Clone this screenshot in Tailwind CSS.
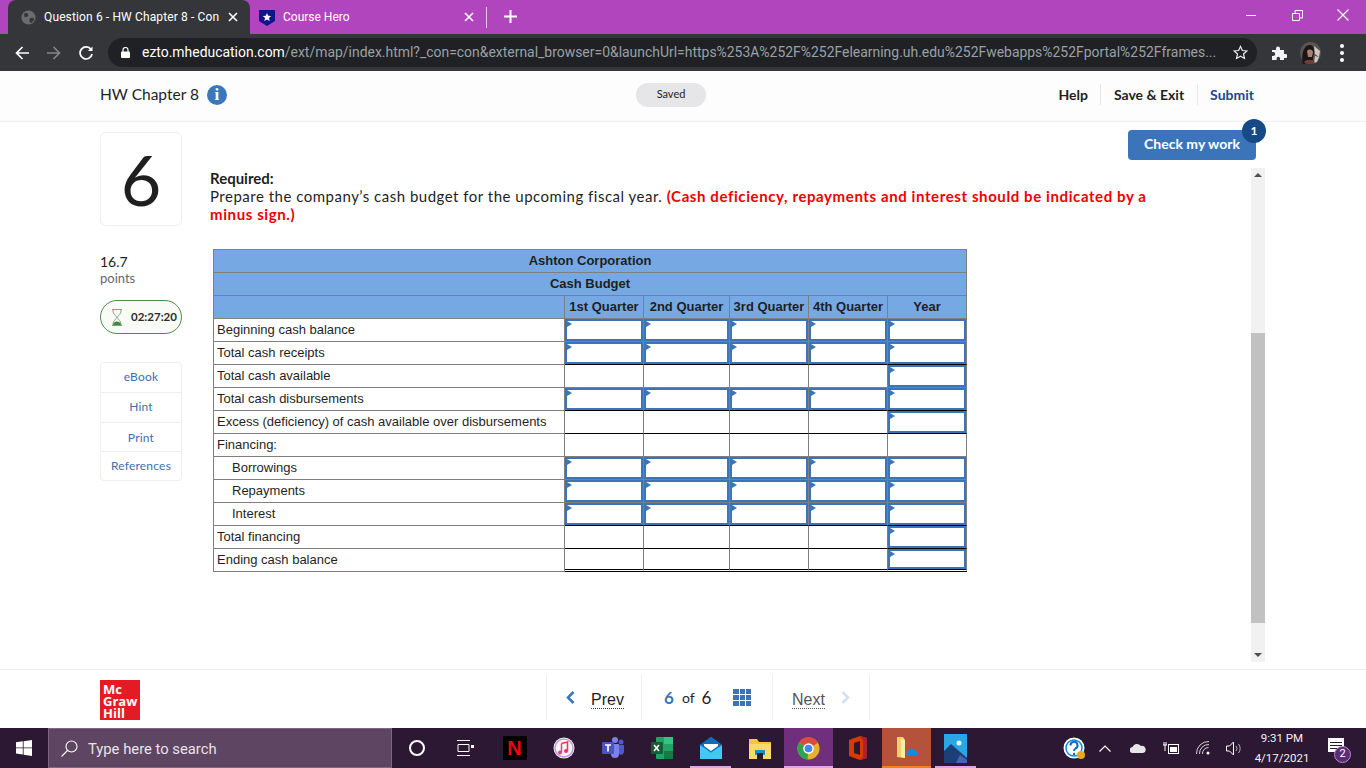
<!DOCTYPE html>
<html lang="en">

<head>
  <meta charset="UTF-8" />
  <title>Question 6 - HW Chapter 8 - Connect</title>
  <script src="https://cdn.jsdelivr.net/npm/@tailwindcss/browser@4"></script>
</head>

<body class="h-screen overflow-hidden flex flex-col bg-white font-['Lato',sans-serif] text-[#1f1f1f]">
  <!-- tab strip -->
  <div class="h-[34px] shrink-0 bg-[#b045bd] flex items-end pl-[8px] font-['Roboto',sans-serif] text-white text-[12px]">
    <div class="w-[242px] h-[34px] bg-[#35363a] rounded-t-lg flex items-center pl-[13px] pr-[12px]">
      <svg class="w-[15px] h-[15px] shrink-0" viewBox="0 0 16 16"><circle cx="8" cy="8" r="7.5" fill="#6b6c70" /><path d="M3 4l3-1 2 2-1 2-3 1zM9 9l4-1 1 2-3 4-2-2z" fill="#35363a" /></svg>
      <span class="ml-[8px] whitespace-nowrap tracking-[0.13px]">Question 6 - HW Chapter 8 - Con</span>
      <svg class="ml-auto w-[10px] h-[10px]" viewBox="0 0 10 10"><path d="M1 1l8 8M9 1l-8 8" stroke="#fff" stroke-width="1.6" /></svg>
    </div>
    <div class="w-[236px] h-[34px] flex items-center pl-[9px] pr-[12px]">
      <svg class="w-[16px] h-[17px] shrink-0" viewBox="0 0 16 17"><path d="M0 1h16v11l-8 5-8-5z" fill="#11148a" /><path d="M8 4l1.2 2.8 3 .2-2.3 2 .8 3L8 10.400 5.300 12l.8-3-2.300-2 3-.2z" fill="#fff" /></svg>
      <span class="ml-[8px]">Course Hero</span>
      <svg class="ml-auto w-[10px] h-[10px]" viewBox="0 0 10 10"><path d="M1 1l8 8M9 1l-8 8" stroke="#fff" stroke-width="1.6" /></svg>
    </div>
    <div class="w-px h-[21px] bg-white/70 mb-[6px]"></div>
    <svg class="ml-[17px] mb-[11px] w-[13px] h-[13px]" viewBox="0 0 13 13"><path d="M6.500 0v13M0 6.500h13" stroke="#fff" stroke-width="2" /></svg>
    <div class="ml-auto h-[34px] flex items-start">
      <div class="w-[46px] h-[30px] flex items-center justify-center"><div class="w-[10px] h-px bg-white"></div></div>
      <div class="w-[46px] h-[30px] flex items-center justify-center">
        <svg class="w-[11px] h-[11px]" viewBox="0 0 11 11" fill="none" stroke="#fff"><path d="M.5 3.500h7v7h-7zM3 3.500v-3h7.500v7.500h-3" /></svg>
      </div>
      <div class="w-[46px] h-[30px] flex items-center justify-center">
        <svg class="w-[12px] h-[12px]" viewBox="0 0 12 12"><path d="M.5.500l11 11M11.500.500l-11 11" stroke="#fff" stroke-width="1.2" /></svg>
      </div>
    </div>
  </div>

  <!-- toolbar -->
  <div class="h-[37px] shrink-0 bg-[#35363a] flex items-center font-['Roboto',sans-serif]">
    <div class="w-[108px] flex items-center pl-[15px] gap-[18px]">
      <svg class="w-[14px] h-[14px]" viewBox="0 0 14 14" fill="none" stroke="#fff" stroke-width="1.700"><path d="M14 7H1.500M7.500 1l-6 6 6 6" /></svg>
      <svg class="w-[14px] h-[14px]" viewBox="0 0 14 14" fill="none" stroke="#85868a" stroke-width="1.700"><path d="M0 7h12.500M6.500 1l6 6-6 6" /></svg>
      <svg class="w-[14px] h-[14px]" viewBox="0 0 14 14" fill="none" stroke="#fff" stroke-width="1.700"><path d="M12 3.500A6 6 0 1 0 13 8" /><path d="M13.500 .5v4.500H9z" fill="#fff" stroke="none" /></svg>
    </div>
    <div class="w-[1149px] h-[29px] rounded-full bg-[#202124] flex items-center pl-[13px] pr-[9px]">
      <svg class="w-[9px] h-[11px] shrink-0" viewBox="0 0 9 11"><path d="M2 5V3a2.500 2.500 0 0 1 5 0v2" fill="none" stroke="#fff" stroke-width="1.200" /><rect y="4.500" width="9" height="6.500" rx="1" fill="#fff" /></svg>
      <span class="ml-[12px] whitespace-nowrap text-[13.950px] text-[#9aa0a6]"><span class="text-white">ezto.mheducation.com</span>/ext/map/index.html?_con=con&amp;external_browser=0&amp;launchUrl=https%253A%252F%252Felearning.uh.edu%252Fwebapps%252Fportal%252Fframes...</span>
      <svg class="ml-auto w-[15px] h-[15px]" viewBox="0 0 16 16" fill="none" stroke="#e8eaed" stroke-width="1.300"><path d="M8 1.500l2 4.400 4.800.5-3.600 3.200 1 4.700L8 11.900l-4.200 2.400 1-4.700L1.200 6.400 6 5.900z" /></svg>
    </div>
    <svg class="ml-[14px] w-[16px] h-[16px]" viewBox="0 0 16 16"><path d="M1 5h4V3.500a2 2 0 0 1 4 0V5h4v4h1.500a2 2 0 0 1 0 4H13v2H9v-1.500a1.700 1.700 0 0 0-3.400 0V15H1v-4h1.200a2 2 0 0 0 0-4H1z" fill="#f1f3f4" /></svg>
    <svg class="ml-[13px] w-[21px] h-[22px]" viewBox="0 0 21 22"><ellipse cx="10.500" cy="11" rx="10.500" ry="11" fill="#5b5450" /><path d="M3 22C1 14 3 3 10 3c3 0 4 3 4 7l-2 12z" fill="#191516" /><path d="M7 9c2-2 5-2 6 1l-1 5-4 0z" fill="#a97f6e" /><path d="M14 4l6 5-1 6-4-3zM15 14l4 1-2 5-3 1z" fill="#cfc6bd" /><path d="M4 20c2-3 8-3 11 0l-3 2H6z" fill="#6a3e3a" /></svg>
    <div class="ml-[19px] flex flex-col gap-[3px]">
      <div class="w-[4px] h-[4px] rounded-full bg-white"></div>
      <div class="w-[4px] h-[4px] rounded-full bg-white"></div>
      <div class="w-[4px] h-[4px] rounded-full bg-white"></div>
    </div>
  </div>

  <!-- assignment header -->
  <div class="h-[51px] shrink-0 bg-[#fdfdfd] border-b border-[#eeeeee] flex items-center pl-[100px] pb-[3px]">
    <div class="w-[536px] flex items-center gap-[8px] text-[15.500px]">
      <span>HW Chapter 8</span>
      <div class="w-[20px] h-[20px] rounded-full bg-[#3b78bb] flex items-center justify-center text-white text-[17px] font-bold font-['Liberation_Serif',serif]">i</div>
    </div>
    <div class="w-[70px] h-[24px] rounded-full bg-[#e6e5e7] flex items-center justify-center text-[11px]">Saved</div>
    <div class="ml-auto mr-[112px] flex items-center text-[14px] font-bold">
      <span class="pr-[12px] border-r border-[#e8e8e8] leading-[21px]">Help</span>
      <span class="px-[13px] border-r border-[#e8e8e8] leading-[21px]">Save &amp; Exit</span>
      <span class="pl-[12px] text-[#1a4a85] leading-[21px]">Submit</span>
    </div>
  </div>

  <!-- question area -->
  <div class="flex-1 min-h-0 flex pl-[100px] pr-[101px] pt-[8px]">
    <div class="w-[82px] shrink-0 mt-[2px]">
      <div class="h-[94px] border border-[#eeeeee] rounded-md flex items-center justify-center text-[70px] leading-none">6</div>
      <div class="mt-[27px] text-[14px] leading-[17px]">16.7</div>
      <div class="text-[13px] leading-[16px] text-[#66686c]">points</div>
      <div class="mt-[14px] h-[34px] rounded-[17px] border border-[#4f8a4a] bg-[#f8fbf6] flex items-center pl-[10px] gap-[8px]">
        <svg class="w-[12px] h-[17px] shrink-0" viewBox="0 0 12 17" fill="none" stroke="#7aa87a" stroke-width="1"><path d="M1 .5h10M1 16.500h10M2 1c0 5 3 5 3.500 7.500C5 11 2 11 2 16M10 1c0 5-3 5-3.500 7.500C7 11 10 11 10 16" /><path d="M2 16c0-2 2-3.500 4-3.500s4 1.500 4 3.500z" fill="#3f8a3f" stroke="none" /></svg>
        <span class="text-[11.500px] font-bold text-[#2b2b2b]">02:27:20</span>
      </div>
      <div class="mt-[28px] border border-[#eeeeee] rounded-sm text-[12px] tracking-[0.2px] text-[#3d70ae] text-center">
        <div class="h-[30px] leading-[27px] border-b border-[#eeeeee]">eBook</div>
        <div class="h-[30px] leading-[27px] border-b border-[#eeeeee]">Hint</div>
        <div class="h-[29px] leading-[30px] border-b border-[#eeeeee]">Print</div>
        <div class="h-[28px] leading-[28px]">References</div>
      </div>
    </div>

    <div class="flex-1 ml-[28px] min-w-0 flex flex-col">
      <div class="h-[38px] shrink-0 flex justify-end pr-[9px]">
        <div class="relative w-[128px] h-[30px] bg-[#3b74b8] rounded-sm flex items-center justify-center text-white text-[14px] font-bold pb-[3px]">
          Check my work
          <div class="absolute -top-[11px] -right-[10px] w-[24px] h-[24px] rounded-full bg-[#154a87] flex items-center justify-center text-[12px]">1</div>
        </div>
      </div>
      <div class="h-[494px] flex">
        <div class="flex-1 min-w-0">
          <div class="pt-[1px] pr-[80px] text-[15px] leading-[18px] tracking-[0.5px]">
            <div class="font-bold tracking-normal">Required:</div>
            <div>Prepare the company’s cash budget for the upcoming fiscal year. <b class="text-[#ee0000] tracking-[0.6px]">(Cash deficiency, repayments and interest should be indicated by a minus sign.)</b></div>
          </div>
          <table id="budget" class="mt-[26px] ml-[3px] w-[754px] table-fixed border-separate border-spacing-0 border-t border-l border-[#7f7f7f] font-['Liberation_Sans',sans-serif] text-[13px]">
            <colgroup>
              <col class="w-[351px]" /><col class="w-[79px]" /><col class="w-[86px]" /><col class="w-[79px]" /><col class="w-[79px]" /><col class="w-[79px]" />
            </colgroup>
            <thead class="font-bold bg-[#76a9e4] text-center">
              <tr><th colspan="6" class="h-[23px] p-0 border-r border-b border-[#7f7f7f]">Ashton Corporation</th></tr>
              <tr><th colspan="6" class="h-[23px] p-0 border-r border-b border-[#7f7f7f]">Cash Budget</th></tr>
              <tr>
                <th class="h-[23px] p-0 border-r border-b border-[#7f7f7f]"></th>
                <th class="p-0 border-r border-b border-[#7f7f7f]">1st Quarter</th>
                <th class="p-0 border-r border-b border-[#7f7f7f]">2nd Quarter</th>
                <th class="p-0 border-r border-b border-[#7f7f7f]">3rd Quarter</th>
                <th class="p-0 border-r border-b border-[#7f7f7f]">4th Quarter</th>
                <th class="p-0 border-r border-b border-[#7f7f7f]">Year</th>
              </tr>
            </thead>
            <tbody></tbody>
          </table>
        </div>
        <!-- scrollbar -->
        <div class="w-[14px] shrink-0 bg-[#f1f1f1] flex flex-col items-center">
          <div class="h-[14px] shrink-0 flex items-center justify-center"><div class="w-0 h-0 border-x-[4px] border-x-transparent border-b-[4px] border-b-[#505050]"></div></div>
          <div class="h-[151px] shrink-0"></div>
          <div class="w-full h-[290px] shrink-0 bg-[#c1c1c1]"></div>
          <div class="mt-auto h-[14px] shrink-0 flex items-center justify-center"><div class="w-0 h-0 border-x-[4px] border-x-transparent border-t-[4px] border-t-[#505050]"></div></div>
        </div>
      </div>
    </div>
  </div>

  <!-- footer -->
  <div class="h-[59px] shrink-0 border-t border-[#eeeeee] flex items-start pl-[100px] pt-[5px]">
    <div class="mt-[5px] w-[40px] h-[40px] bg-[#e21b24] text-white text-[13px] leading-[12px] font-bold pl-[3px] pt-[3px] font-['Open_Sans',sans-serif]">Mc<br />Graw<br />Hill</div>
    <div class="ml-[406px] h-[45px] flex items-center border-x border-[#eeeeee] text-[16px]">
      <div class="w-[95px] h-full flex items-center pl-[19px] gap-[16px] border-r border-[#eeeeee]">
        <svg class="w-[9px] h-[13px]" viewBox="0 0 9 13" fill="none" stroke="#3b74b8" stroke-width="2.500"><path d="M7.500 1L2 6.500 7.500 12" /></svg>
        <span class="mt-[4px] font-['Liberation_Sans',sans-serif] border-b border-dotted border-[#333] leading-[17px]">Prev</span>
      </div>
      <div class="w-[131px] h-full flex items-center pl-[22px] border-r border-[#eeeeee] text-[17px]">
        <b class="text-[#3b74b8]">6</b><span class="ml-[8px] text-[14px]">of</span><span class="ml-[7px]">6</span>
        <div class="ml-[22px] w-[18px] grid grid-cols-3 gap-px">
          <div class="h-[5px] bg-[#3b74b8]"></div><div class="h-[5px] bg-[#3b74b8]"></div><div class="h-[5px] bg-[#3b74b8]"></div>
          <div class="h-[5px] bg-[#3b74b8]"></div><div class="h-[5px] bg-[#3b74b8]"></div><div class="h-[5px] bg-[#3b74b8]"></div>
          <div class="h-[5px] bg-[#3b74b8]"></div><div class="h-[5px] bg-[#3b74b8]"></div><div class="h-[5px] bg-[#3b74b8]"></div>
        </div>
      </div>
      <div class="w-[96px] h-full flex items-center pl-[19px] gap-[16px]">
        <span class="mt-[4px] font-['Liberation_Sans',sans-serif] text-[#555] border-b border-dotted border-[#555] leading-[17px]">Next</span>
        <svg class="w-[9px] h-[13px]" viewBox="0 0 9 13" fill="none" stroke="#d3e0ef" stroke-width="2.500"><path d="M1.500 1L7 6.500 1.500 12" /></svg>
      </div>
    </div>
  </div>

  <!-- taskbar -->
  <div class="h-[40px] shrink-0 bg-[#2d1833] flex items-center text-white font-['Roboto',sans-serif]">
    <div class="w-[48px] flex justify-center">
      <svg class="w-[16px] h-[16px]" viewBox="0 0 16 16" fill="#fff"><path d="M0 2.300l6.800-1v6.200H0zM7.600 1.200L16 0v7.500H7.600zM0 8.300h6.800v6.300l-6.800-1zM7.600 8.300H16V16l-8.400-1.200z" /></svg>
    </div>
    <div class="w-[344px] h-full bg-[#5e4561] border border-[#7d6880] flex items-center pl-[12px]">
      <svg class="w-[17px] h-[17px]" viewBox="0 0 17 17" fill="none" stroke="#fff" stroke-width="1.100"><circle cx="10.500" cy="6.500" r="5.500" /><path d="M6.500 10.500L.5 16.500" /></svg>
      <span class="ml-[10px] mt-[2px] text-[14.800px] text-[#e8e2e9]">Type here to search</span>
    </div>
    <div class="flex h-full">
      <div class="w-[49px] flex items-center justify-center"><div class="w-[16px] h-[16px] rounded-full border-2 border-white"></div></div>
      <div class="w-[49px] flex items-center justify-center">
        <svg class="w-[17px] h-[16px]" viewBox="0 0 17 16" fill="none" stroke="#fff"><path d="M0 .5h13M0 15.500h13M1 4.500h11v7H1z" /><rect x="14" y="5" width="3" height="3" fill="#fff" stroke="none" /></svg>
      </div>
      <div class="w-[49px] flex items-center justify-center"><div class="w-[24px] h-[24px] bg-black flex items-center justify-center text-[#e50914] text-[20px] font-bold font-['Liberation_Sans',sans-serif]">N</div></div>
      <div class="w-[49px] flex items-center justify-center">
        <svg class="w-[22px] h-[22px]" viewBox="0 0 22 22"><circle cx="11" cy="11" r="10.500" fill="#f7f3f6" /><circle cx="11" cy="11" r="9" fill="none" stroke="#c79be0" stroke-width="1.500" /><path d="M8.500 6.500l6-1.500v9" fill="none" stroke="#f0365f" stroke-width="1.500" /><path d="M8.500 6.500V15" stroke="#e0447f" stroke-width="1.500" /><circle cx="7" cy="15.500" r="2" fill="#e0447f" /><circle cx="13" cy="14" r="2" fill="#f0365f" /></svg>
      </div>
      <div class="w-[49px] flex items-center justify-center">
        <svg class="w-[24px] h-[24px]" viewBox="0 0 24 24"><circle cx="14" cy="4" r="3" fill="#7b83eb" /><circle cx="20" cy="6" r="2.500" fill="#5059c9" /><path d="M10 8h8v10a4 4 0 0 1-8 0z" fill="#7b83eb" /><path d="M18 9h5v7a3 3 0 0 1-5 2z" fill="#5059c9" /><rect x="1" y="6" width="12" height="12" rx="1" fill="#4b53bc" /><path d="M4 9h6M7 9v6.500" stroke="#fff" stroke-width="1.700" /></svg>
      </div>
      <div class="w-[49px] flex items-center justify-center">
        <svg class="w-[24px] h-[24px]" viewBox="0 0 24 24"><rect x="6" y="1" width="17" height="22" rx="1" fill="#21a366" /><rect x="14" y="1" width="9" height="7" fill="#33c481" /><rect x="14" y="15" width="9" height="8" fill="#107c41" /><rect x="1" y="6" width="12" height="12" rx="1" fill="#185c37" /><path d="M4 9l5 6M9 9l-5 6" stroke="#fff" stroke-width="1.500" /></svg>
      </div>
      <div class="relative w-[49px] flex items-center justify-center">
        <svg class="w-[24px] h-[24px]" viewBox="0 0 24 24"><path d="M1 9l11-8 11 8v14H1z" fill="#1f9fe3" /><path d="M1 9l11 8 11-8v14H1z" fill="#43c7f4" /><path d="M1 9l11-8 11 8-11 7z" fill="#0f6cbd" /><path d="M5 8h14v2l-7 5-7-5z" fill="#fff" /></svg>
        <span class="absolute bottom-0 inset-x-[4px] h-[2px] bg-[#e3a3e8]"></span>
      </div>
      <div class="w-[49px] flex items-center justify-center">
        <svg class="w-[22px] h-[21px]" viewBox="0 0 22 21"><path d="M0 1h8l2 3h12v14H0z" fill="#f6c445" /><rect y="6" width="22" height="15" fill="#ffd968" /><rect x="6" y="12" width="10" height="5" fill="#1b8ed1" /><rect x="8" y="15" width="6" height="6" fill="#2d1833" /></svg>
      </div>
      <div class="relative w-[49px] flex items-center justify-center bg-[#6f2f7c]">
        <svg class="w-[23px] h-[23px]" viewBox="0 0 24 24"><circle cx="12" cy="12" r="11.500" fill="#e5b22d" /><path d="M12 12L2 6a11.500 11.500 0 0 1 20 0z" fill="#dd4b3e" /><path d="M12 12l-1 11.500A11.500 11.500 0 0 1 2 6z" fill="#2ea44f" /><circle cx="12" cy="12" r="5.500" fill="#fff" /><circle cx="12" cy="12" r="4" fill="#4285f4" /></svg>
        <span class="absolute bottom-0 inset-x-0 h-[2px] bg-[#e3a3e8]"></span>
      </div>
      <div class="w-[49px] flex items-center justify-center">
        <svg class="w-[18px] h-[24px]" viewBox="0 0 18 24"><path d="M0 4l11-4 7 2v20l-7 2-11-4z" fill="#d83b01" /><path d="M11 0l7 2v20l-7 2 3-3V4z" fill="#a4262c" /><path d="M5 7l6-2v14l-6-2z" fill="#2d1833" /></svg>
      </div>
      <div class="relative w-[49px] flex items-center justify-center bg-[#b5523c]">
        <svg class="w-[24px] h-[24px]" viewBox="0 0 24 24"><path d="M2 1h6l2 3v18l-8-1z" fill="#f3cf6b" /><path d="M6 3l4 1v18l-4-1z" fill="#ffe9a6" /><path d="M12 19a5 5 0 0 1 3-6 6 6 0 0 1 6 2 3 3 0 0 1 2 4z" fill="#1e88d6" /></svg>
        <span class="absolute bottom-0 inset-x-0 h-[2px] bg-[#ff7a1a]"></span>
      </div>
      <div class="relative w-[49px] flex items-center justify-center">
        <svg class="w-[23px] h-[29px]" viewBox="0 0 23 29"><rect width="23" height="29" fill="#2aa5e6" /><circle cx="15" cy="9" r="2.500" fill="#dff4ff" /><path d="M0 29V17l7-7 16 14v5z" fill="#1c3f78" /><path d="M12 29l4-8 7 5v3z" fill="#4a63b8" /></svg>
        <span class="absolute bottom-0 inset-x-[4px] h-[2px] bg-[#e3a3e8]"></span>
      </div>
    </div>
    <svg class="ml-[83px] w-[22px] h-[22px] shrink-0" viewBox="0 0 22 22"><circle cx="11" cy="11" r="10.500" fill="#fff" /><circle cx="11" cy="11" r="8" fill="none" stroke="#0f8ad6" stroke-width="1.500" /><path d="M7.500 8.500a3.500 3.500 0 1 1 5 3c-1 .6-1.500 1-1.500 2.500" fill="none" stroke="#0f6cbd" stroke-width="2" /><circle cx="11" cy="17" r="1.200" fill="#0f6cbd" /><circle cx="18" cy="18" r="4" fill="#e9a91f" /></svg>
    <svg class="ml-[14px] w-[12px] h-[7px] shrink-0" viewBox="0 0 12 7" fill="none" stroke="#fff" stroke-width="1.200"><path d="M.5 6.500L6 1l5.500 5.500" /></svg>
    <svg class="ml-[19px] w-[16px] h-[10px] shrink-0" viewBox="0 0 16 10" fill="#e6e6e6"><path d="M3 10a3 3 0 0 1-.5-6A5 5 0 0 1 11 3a3.500 3.500 0 0 1 2 7z" /></svg>
    <svg class="ml-[17px] w-[16px] h-[12px] shrink-0" viewBox="0 0 16 12"><rect x="5.500" y="2.500" width="10" height="9" fill="none" stroke="#fff" /><rect x="7" y="5" width="7" height="5" fill="#fff" /><path d="M0 3h4M1 0v3M3 0v3M2 3v6" stroke="#fff" /></svg>
    <svg class="ml-[17px] w-[15px] h-[14px] shrink-0" viewBox="0 0 15 14" fill="none" stroke="#d0d0d0"><path d="M.5 13A12 12 0 0 1 13 .5M3.500 13A9 9 0 0 1 13 3.500M6.500 13a6 6 0 0 1 6-6.500" /><circle cx="12" cy="12" r="1.500" fill="#fff" stroke="none" /></svg>
    <svg class="ml-[15px] w-[16px] h-[15px] shrink-0" viewBox="0 0 16 15" fill="none" stroke="#fff"><path d="M.5 5h3L7.500 1v13l-4-4h-3z" /><path d="M10 5a4 4 0 0 1 0 5M12.500 3a7 7 0 0 1 0 9" stroke="#b0b0b0" /></svg>
    <div class="ml-[8px] w-[64px] shrink-0 text-center text-[11.500px] leading-[20px] text-[#f2f2f2]">9:31 PM<br />4/17/2021</div>
    <div class="relative ml-[14px] w-[16px] h-[14px] shrink-0 bg-white -mt-[6px] flex flex-col justify-center gap-[2px] px-[2px]">
      <div class="h-px bg-[#2d1833]"></div>
      <div class="h-px bg-[#2d1833]"></div>
      <div class="h-px bg-[#2d1833]"></div>
      <div class="absolute top-[8px] left-[6px] w-[17px] h-[17px] rounded-full bg-[#5c2d75] border border-[#b58cc9] flex items-center justify-center text-[11px]">2</div>
    </div>
  </div>

  <script>
    const grayCell = "p-0 border-r border-b border-[#7f7f7f]";
    // same cell, with the black rule the worksheet puts under totals
    const ruledCell = "p-0 border-r border-[#7f7f7f] border-b border-b-black";
    const doubleCell = "p-0 border-r border-[#7f7f7f] border-b-[3px] border-double border-b-black";
    const flag = '<span class="absolute top-0 left-0 w-[5px] h-[6px] bg-[#3b74b8] [clip-path:polygon(0_0,100%_50%,0_100%)]"></span>';
    const inputBox = `<div class="relative h-[22px] border-2 border-[#3b74b8]">${flag}</div>`;
    const lastBox = `<div class="relative h-[20px] border-2 border-[#3b74b8]">${flag}</div>`;

    // i = input in every quarter and the year, y = input in year only, n = none
    // rule = line under the amount cells
    const rows = [
      ["Beginning cash balance", "i"],
      ["Total cash receipts", "i", "black"],
      ["Total cash available", "y"],
      ["Total cash disbursements", "i", "black"],
      ["Excess (deficiency) of cash available over disbursements", "y", "black"],
      ["Financing:", "n"],
      ["Borrowings", "i", "", true],
      ["Repayments", "i", "", true],
      ["Interest", "i", "black", true],
      ["Total financing", "y", "black"],
      ["Ending cash balance", "y", "double"],
    ];

    document.querySelector("#budget tbody").innerHTML = rows.map(([label, kind, rule, indent]) => {
      const cellClass = rule === "double" ? doubleCell : rule === "black" ? ruledCell : grayCell;
      const box = rule === "double" ? lastBox : inputBox;
      let html = `<tr><td class="h-[23px] p-0 border-r border-b border-[#7f7f7f] whitespace-nowrap ${indent ? "pl-[18px]" : "pl-[3px]"}">${label}</td>`;
      for (let col = 0; col < 5; col++) {
        const hasInput = kind === "i" || (kind === "y" && col === 4);
        html += `<td class="${cellClass}">${hasInput ? box : ""}</td>`;
      }
      return html + "</tr>";
    }).join("");
  </script>
</body>

</html>
